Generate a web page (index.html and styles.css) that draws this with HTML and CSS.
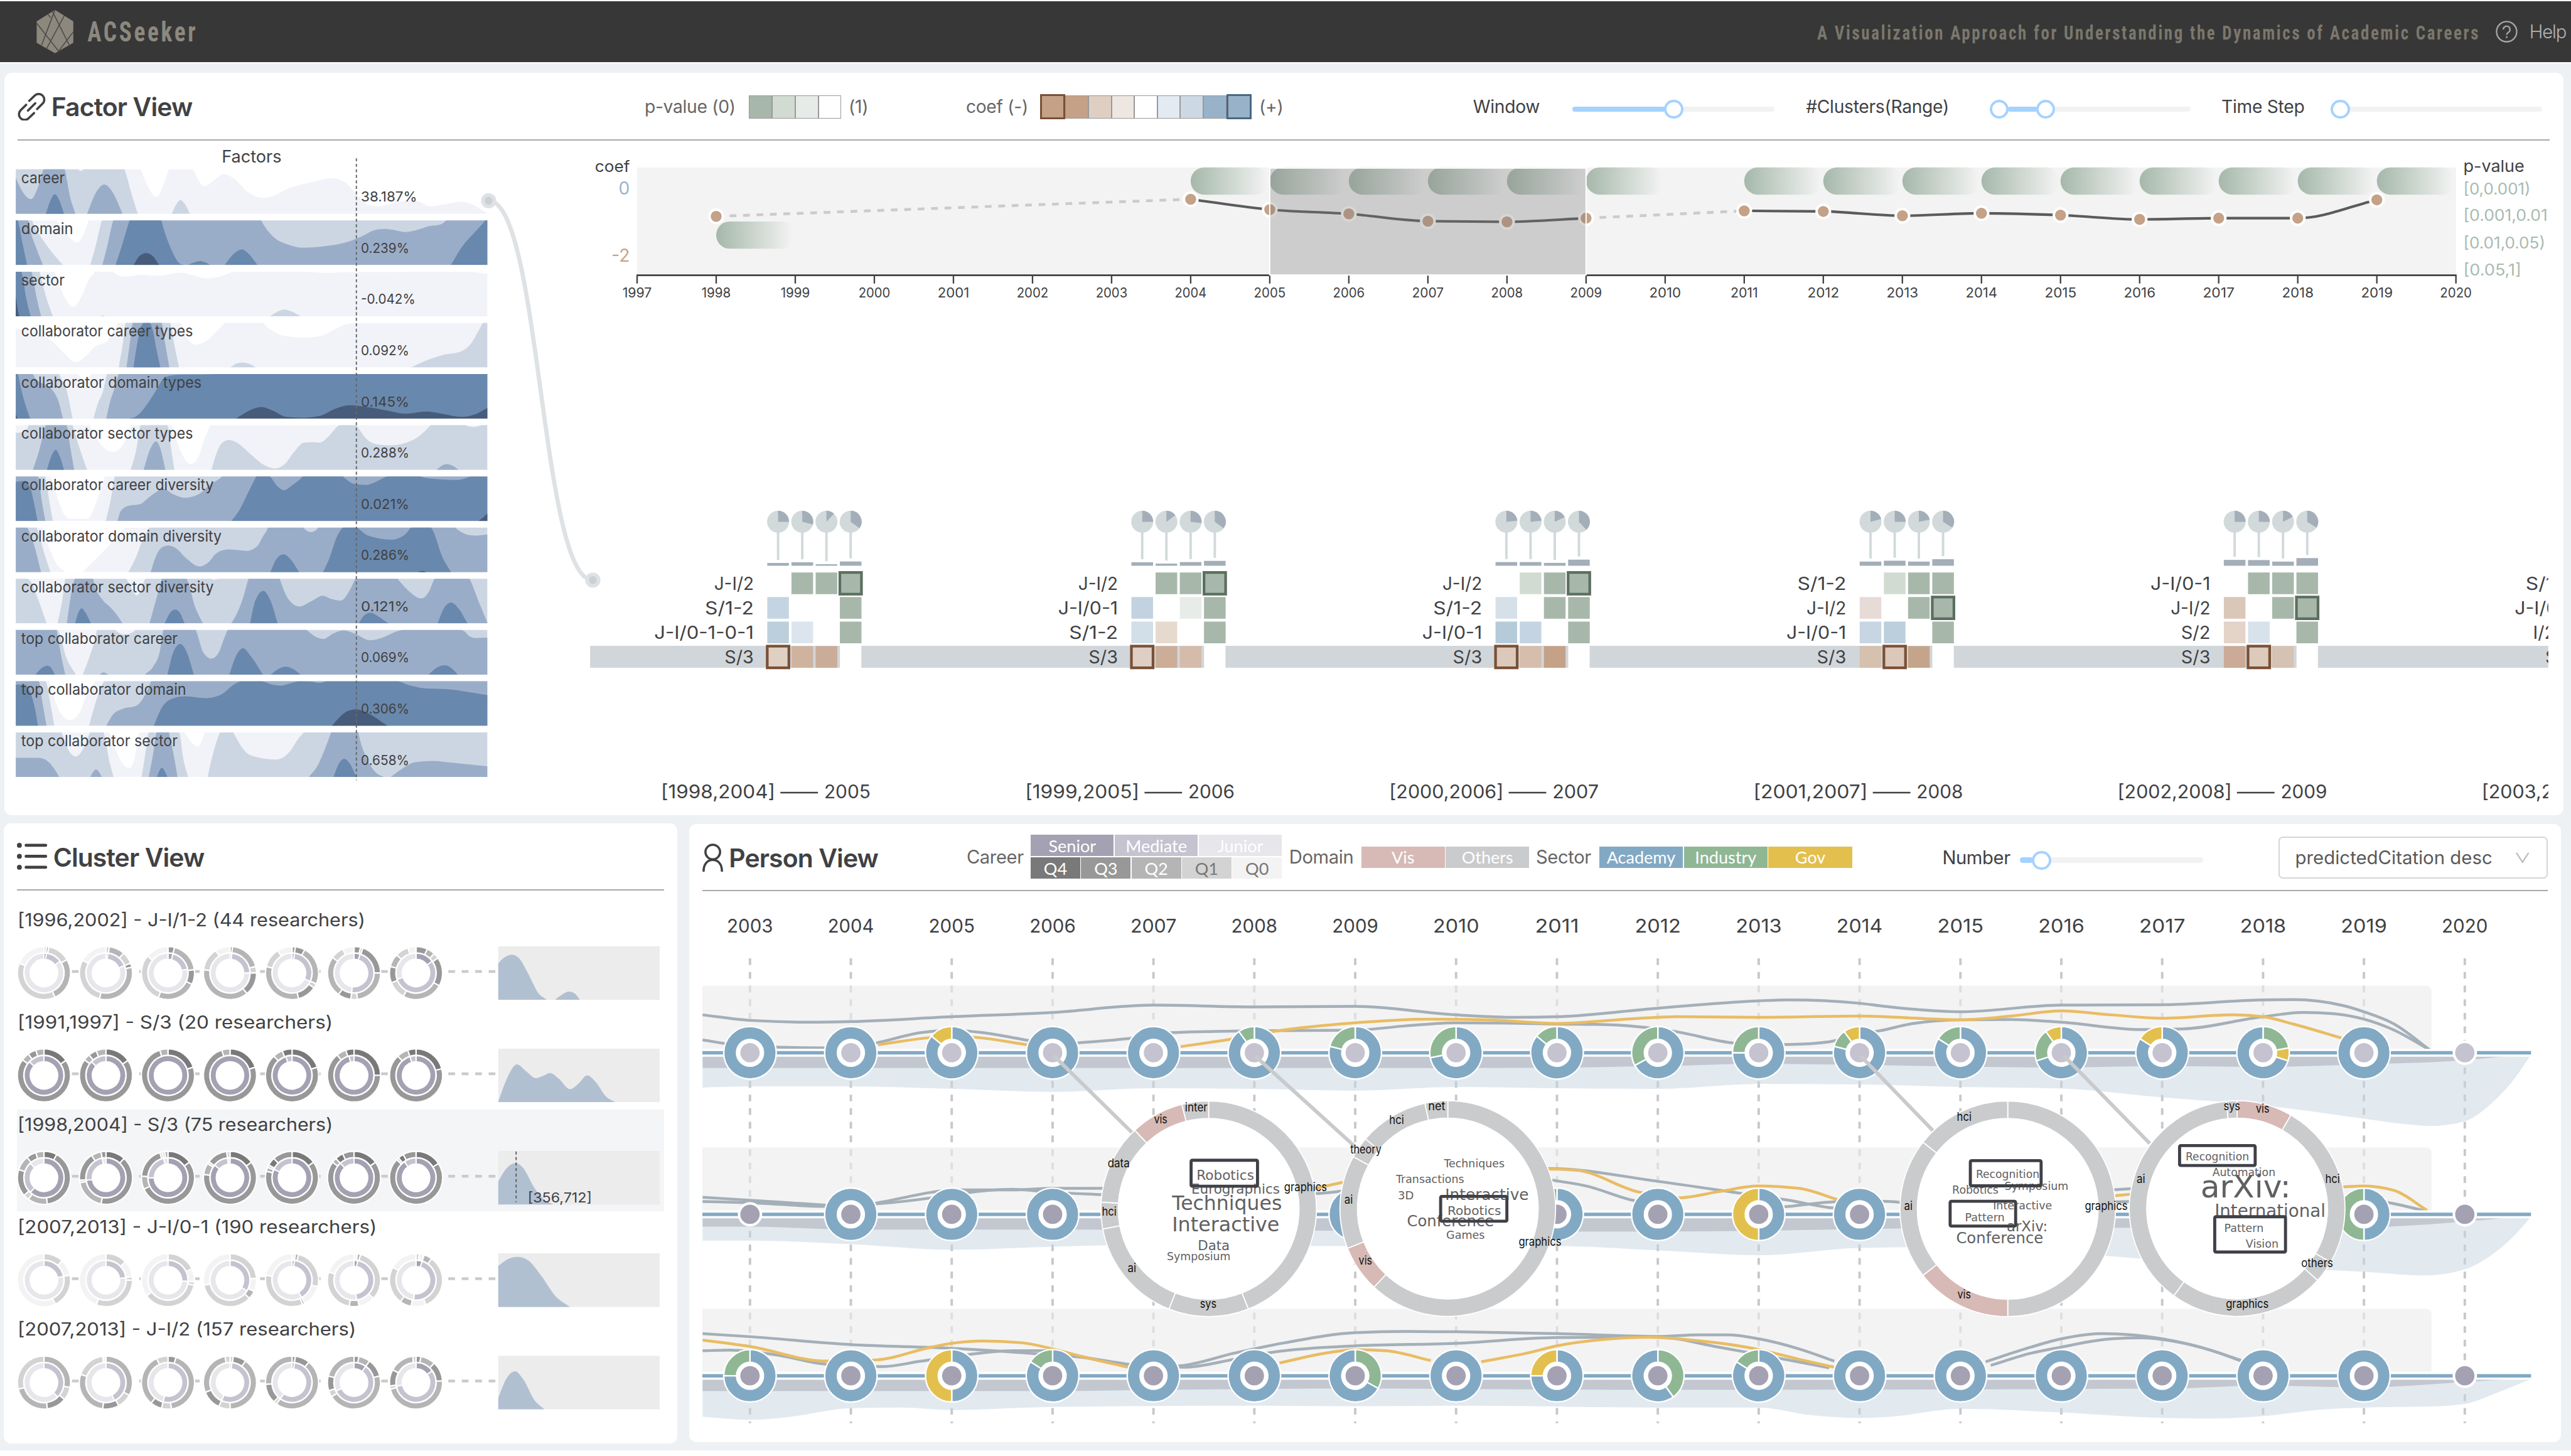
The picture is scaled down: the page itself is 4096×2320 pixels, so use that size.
FILE: index.html
```html
<!DOCTYPE html>
<html lang="en">
<head>
<meta charset="utf-8">
<title>ACSeeker</title>
<link rel="stylesheet" href="styles.css">
</head>
<body>
<header class="topbar">
  <svg class="brand" viewBox="0 0 400 100">
    <path class="brand-hex" d="M90 14L120 33V68L90 85L60 68V33Z"/>
    <path class="brand-cut" d="M60 36L97 83M86 17L114 73M90 14L68 72M105 24L76 78M120 50L95 83M78 21L83 27"/>
    <text class="tech" x="143" y="66" font-size="46" textLength="181" lengthAdjust="spacingAndGlyphs">ACSeeker</text>
  </svg>
  <div class="topbar-right">
    <svg class="tagline" viewBox="0 0 1090 100">
      <text class="tech dim" x="0" y="63" font-size="33" textLength="1085" lengthAdjust="spacingAndGlyphs">A Visualization Approach for Understanding the Dynamics of Academic Careers</text>
    </svg>
    <svg class="help-icon" viewBox="0 0 40 40"><circle cx="20" cy="20" r="16.5"/><path d="M14.500 16.500a5.500 5.500 0 1 1 8.500 4.600c-2 1.300-3 2-3 4.200"/><circle class="dot" cx="20" cy="29" r="1.500"/></svg>
    <span class="help">Help</span>
  </div>
</header>
<main>
  <section class="panel factor">
    <div class="head">
      <h2 class="w-ft"><svg class="ico" viewBox="0 0 46 46"><path d="M19 13L28 4.500a9 9 0 0 1 13 13L32 26.500M27 33L18 41.500a9 9 0 0 1-13-13L14 19.500M17 29L29 17"/></svg>Factor View</h2>
      <span class="lg w-pv">p-value (0)</span>
      <div class="ramp g"><i class="g1"></i><i class="g2"></i><i class="g3"></i><i></i></div>
      <span class="lg w-one">(1)</span>
      <span class="lg w-cf">coef (-)</span>
      <div class="ramp c"><i class="b1 selb"></i><i class="b1"></i><i class="b2"></i><i class="b3"></i><i></i><i class="u1"></i><i class="u2"></i><i class="u3"></i><i class="u3 selu"></i></div>
      <span class="lg w-plus">(+)</span>
      <span class="sl w-win">Window</span>
      <div class="slider s1"><b></b><u></u></div>
      <span class="sl w-clu">#Clusters(Range)</span>
      <div class="slider s2"><u></u><b></b><u></u></div>
      <span class="sl w-ts">Time Step</span>
      <div class="slider s3"><u></u></div>
    </div>
    <svg id="factor" viewBox="29 230 4144 1104"></svg>
  </section>
  <div class="lower">
    <section class="panel cluster">
      <div class="head">
        <h2><svg class="ico" viewBox="0 0 50 46"><path class="thick" d="M15 4H47M15 22H47M15 40H47"/><circle class="dot" cx="4" cy="4" r="4"/><circle class="dot" cx="4" cy="22" r="4"/><circle class="dot" cx="4" cy="40" r="4"/></svg>Cluster View</h2>
      </div>
      <svg id="cluster" viewBox="28 1458 1059 905"></svg>
    </section>
    <section class="panel person">
      <div class="head">
        <h2 class="w-pt"><svg class="ico slim" viewBox="0 0 34 46"><circle cx="17" cy="14" r="12"/><path d="M2 45c0-11 6-18 15-18s15 7 15 18"/></svg>Person View</h2>
        <span class="lg w-car">Career</span>
        <div class="career">
          <div class="cells"><i class="k1">Senior</i><i class="k2">Mediate</i><i class="k3">Junior</i></div>
          <div class="cells"><i class="q4">Q4</i><i class="q3">Q3</i><i class="q2">Q2</i><i class="q1">Q1</i><i class="q0">Q0</i></div>
        </div>
        <span class="lg w-dom">Domain</span>
        <div class="cells dom"><i class="vis">Vis</i><i class="oth">Others</i></div>
        <span class="lg w-sec">Sector</span>
        <div class="cells sec"><i class="aca">Academy</i><i class="ind">Industry</i><i class="gov">Gov</i></div>
        <span class="sl w-num">Number</span>
        <div class="slider s4"><b></b><u></u></div>
        <div class="select"><span>predictedCitation desc</span><svg viewBox="0 0 24 20"><path d="M2 2L12 17L22 2"/></svg></div>
      </div>
      <svg id="person" viewBox="1150 1459 3020 902"></svg>
    </section>
  </div>
</main>
<script src="charts.js"></script>
</body>
</html>
```
FILE: styles.css
```css
html { font-size: calc(100vw / 42.08); background: #fff; }
body { margin: 0; font-family: Inter, "Noto Sans", sans-serif; font-size: .28rem; color: #404143; overflow: hidden; }
h2, i, b, u { font-style: normal; font-weight: inherit; text-decoration: none; margin: 0; }
svg { display: block; }

.topbar { height: 1rem; margin-top: .02rem; background: #373737; display: flex; justify-content: space-between; overflow: hidden; }
.brand { width: 4rem; height: 1rem; }
.brand-hex { fill: #8c887e; }
.brand-cut { fill: none; stroke: #4b4a46; stroke-width: 1.6; }
.tech { font-weight: 700; fill: #8c887e; letter-spacing: .1em; }
.tech.dim { fill: #7b776c; }
.topbar-right { display: flex; align-items: center; }
.tagline { width: 10.9rem; height: 1rem; }
.help-icon { width: .4rem; height: .4rem; margin-left: .19rem; fill: none; stroke: #a5a5a5; stroke-width: 2.4; }
.help-icon .dot { fill: #a5a5a5; stroke: none; }
.help { font-size: .3rem; font-weight: 300; color: #b3b3b3; margin-left: .17rem; width: .68rem; letter-spacing: -.012rem; }

main { margin-top: .02rem; height: 22.7rem; background: #edf1f4; box-sizing: border-box; padding: .15rem .12rem 0 .07rem; }
.panel { background: #fff; border-radius: .12rem; box-sizing: border-box; overflow: hidden; }
.factor { height: 12.16rem; padding: 0 .23rem 0 .22rem; }
.lower { display: flex; gap: .19rem; margin-top: .13rem; }
.cluster { width: 11.03rem; height: 10.15rem; padding: 0 .22rem; margin-left: -.01rem; }
.person { width: 30.64rem; height: 10.12rem; padding: 0 .22rem; margin-top: .01rem; }
.head { height: 1.11rem; box-sizing: border-box; padding-top: .025rem; border-bottom: .022rem solid #aca7a8; display: flex; align-items: center; white-space: nowrap; }
.lower .head { height: 1.1rem; }
.panel > svg { width: 100%; }
#factor { height: 11.04rem; overflow: visible; }
#cluster { height: 9.05rem; }
#person { height: 9.02rem; }

h2 { font-size: .42rem; font-weight: 600; letter-spacing: -.009rem; display: flex; align-items: center; gap: .09rem; color: #404143; }
.ico { width: .46rem; height: .46rem; fill: none; stroke: #404143; stroke-width: 3.6; stroke-linecap: round; }
.ico .thick { stroke-width: 5; }
.ico .dot { fill: #404143; stroke: none; }
.ico.slim { width: .34rem; }
.cluster .ico { width: .5rem; }
.lg, .sl { font-size: .29rem; box-sizing: border-box; letter-spacing: -.003rem; }
.lg { color: #666; }
.w-ft { width: 10.26rem; }
.w-pv { width: 1.71rem; }
.w-one { width: 2.04rem; padding-left: .12rem; }
.w-cf { width: 1.21rem; }
.w-plus { width: 3.62rem; padding-left: .12rem; }
.w-win { width: 1.63rem; }
.w-clu { width: 3.01rem; margin-left: .52rem; }
.w-ts { width: 1.79rem; margin-left: .5rem; }
.w-pt { width: 4.32rem; }
.w-car { width: 1.05rem; }
.w-dom { width: 1.3rem; padding-left: .12rem; }
.w-sec { width: 1.145rem; padding-left: .11rem; }
.w-num { width: 1.27rem; margin-left: 1.476rem; }
.person .sl, .person .lg { font-size: .3rem; letter-spacing: -.004rem; }
.person .lg { margin-top: -.03rem; }

.ramp { display: flex; height: .38rem; box-sizing: border-box; }
.ramp i { flex: 1; box-sizing: border-box; border: .02rem solid #999; border-left-width: .01rem; border-right-width: .01rem; background: #fff; }
.ramp.g { width: 1.51rem; }
.ramp.c { width: 3.47rem; }
.ramp .g1 { background: #a7b8ab; }
.ramp .g2 { background: #d1dbd1; }
.ramp .g3 { background: #e6ebe7; }
.ramp .b1 { background: #c4a187; }
.ramp .b2 { background: #dfcfc3; }
.ramp .b3 { background: #eee6e1; }
.ramp .u1 { background: #e3eaf2; }
.ramp .u2 { background: #ccd9e4; }
.ramp .u3 { background: #98b2ca; }
.ramp .selb, .ramp .selu { border: .04rem solid #7a5036; margin: -.015rem 0; }
.ramp .selu { border-color: #4a6780; }

.slider { height: .09rem; border-radius: .05rem; background: #f2f2f2; display: flex; align-items: center; margin-top: .08rem; }
.slider b { height: .09rem; border-radius: .05rem; background: #a5d2ff; }
.slider u { width: .31rem; height: .31rem; box-sizing: border-box; border: .045rem solid #a5d2ff; border-radius: 50%; background: #fff; flex: none; }
.s1 { width: 3.3rem; }
.s1 b { width: 1.52rem; margin-right: -.02rem; }
.s2 { width: 3.29rem; }
.s2 b { width: .48rem; margin: 0 -.015rem; }
.s3 { width: 3.46rem; }
.s4 { width: 3rem; }
.s4 b { width: .22rem; margin-right: -.02rem; }

.career { width: 4.11rem; margin-top: -.035rem; }
.cells { display: flex; gap: .015rem; height: .35rem; margin-top: -.025rem; }
.career .cells { margin-top: 0; }
.career .cells + .cells { margin-top: .02rem; }
.cells i { flex: 1 1 0; display: flex; align-items: center; justify-content: center; color: #fff; font: 400 .278rem/1 Lato, sans-serif; }
.dom { width: 2.75rem; }
.sec { width: 4.14rem; }
.k1 { background: #a3a1b2; } .k2 { background: #c5c3d0; } .k3 { background: #e7e6ea; }
.q4 { background: #797979; } .q3 { background: #989898; } .q2 { background: #b5b5b5; }
.cells .q1 { background: #d3d3d3; color: #777; } .cells .q0 { background: #f3f3f3; color: #777; }
.vis { background: #d7b9b5; } .oth { background: #cacbcc; }
.aca { background: #82a9c4; } .ind { background: #8fb794; } .gov { background: #e3c04e; }
.select { margin-left: auto; width: 4.405rem; height: .685rem; box-sizing: border-box; border: .022rem solid #d6d6d6; border-radius: .07rem; display: flex; align-items: center; justify-content: space-between; padding: 0 .27rem 0 .25rem; font-size: .302rem; color: #595959; }
.select svg { width: .24rem; height: .2rem; fill: none; stroke: #bdbdbd; stroke-width: 2.4; }

svg text { font-family: Inter, "Noto Sans", sans-serif; }
svg text.tech { font-family: "Roboto Condensed", "Liberation Sans Narrow", Roboto, sans-serif; }
svg text.word { font-family: "DejaVu Sans", sans-serif; fill: #5f6062; }
```
FILE: charts.js
```js
const NS = 'http://www.w3.org/2000/svg';
function el(parent, tag, attrs, text) {
  const n = document.createElementNS(NS, tag);
  for (const k in attrs) n.setAttribute(k, attrs[k]);
  if (text !== undefined) n.textContent = text;
  parent.appendChild(n);
  return n;
}
function label(parent, x, y, str, size, o = {}) {
  const a = { x, y, 'font-size': size, fill: o.fill || '#404143' };
  if (o.anchor) a['text-anchor'] = o.anchor;
  if (o.len) { a.textLength = o.len; a.lengthAdjust = 'spacingAndGlyphs'; }
  if (o.cls) a.class = o.cls;
  return el(parent, 'text', a, str);
}
// Monotone cubic through the points
function curve(p) {
  const n = p.length, d = [], m = [];
  for (let i = 0; i < n - 1; i++) d.push((p[i + 1][1] - p[i][1]) / (p[i + 1][0] - p[i][0]));
  m[0] = d[0];
  for (let i = 1; i < n - 1; i++) {
    if (d[i - 1] * d[i] <= 0) { m[i] = 0; continue; }
    const h0 = p[i][0] - p[i - 1][0], h1 = p[i + 1][0] - p[i][0];
    const q = (d[i - 1] * h1 + d[i] * h0) / (h0 + h1);
    m[i] = Math.sign(d[i]) * Math.min(Math.abs(d[i - 1]) * 2, Math.abs(d[i]) * 2, Math.abs(q));
  }
  m[n - 1] = d[n - 2];
  let s = `${p[0][0]},${p[0][1]}`;
  for (let i = 0; i < n - 1; i++) {
    const h = (p[i + 1][0] - p[i][0]) / 3;
    s += `C${p[i][0] + h},${p[i][1] + m[i] * h} ${p[i + 1][0] - h},${p[i + 1][1] - m[i + 1] * h} ${p[i + 1][0]},${p[i + 1][1]}`;
  }
  return s;
}
const parse = s => s.trim().split(/\s+/).map(q => q.split(/[,:]/).map(Number));
const polar = (cx, cy, r, f) => [cx + r * Math.sin(f * 2 * Math.PI), cy - r * Math.cos(f * 2 * Math.PI)];
function sector(cx, cy, r0, r1, a, b) {
  if (b - a > .999) {
    const ring = r => `M${cx - r},${cy}a${r},${r} 0 1 0 ${2 * r},0a${r},${r} 0 1 0 ${-2 * r},0Z`;
    return ring(r1) + ring(r0);
  }
  const big = b - a > .5 ? 1 : 0;
  const [x0, y0] = polar(cx, cy, r1, a), [x1, y1] = polar(cx, cy, r1, b);
  const [x2, y2] = polar(cx, cy, r0, b), [x3, y3] = polar(cx, cy, r0, a);
  return `M${x0},${y0}A${r1},${r1} 0 ${big} 1 ${x1},${y1}L${x2},${y2}A${r0},${r0} 0 ${big} 0 ${x3},${y3}Z`;
}

/* ---------- Factor view: horizon rows ---------- */
const F = document.getElementById('factor');
const LV = ['', '#f1f3f8', '#ccd6e3', '#9aadc8', '#6988ad', '#475c7a'];
const FULL = '41,-5 1251,-5';
const factors = [
  ['career', '38.187%',
    [1, '41,-5 355,-5 361,0 375,30 402,62 420,35 434,0 437,-5 490,-5 496,0 510,25 525,38 545,28 575,11 600,20 635,50 672,64 700,60 740,43 800,29 855,20 885,29 915,55 945,80 968,83 1000,78 1045,70 1070,71 1105,83 1150,77 1185,73 1215,80 1251,99'],
    [2, '41,-5 199,-5 202,0 207,4 213,2 217,-3 318,-5 322,5 338,55 354,100'], [2, '441,100 452,80 463,69 475,78 488,100'],
    [3, '41,19 55,45 80,67 98,40 112,0 114,-5 165,-5 168,5 180,60 194,100'], [3, '224,100 245,55 268,34 290,52 315,100'],
    [4, '118,100 130,70 141,56 153,70 165,100']],
  ['domain', '0.239%',
    [1, '41,-5 138,-5 145,0 175,35 200,49 215,30 228,0 230,-5 1251,-5'],
    [2, '41,-5 80,-5 85,5 120,55 162,100'], [2, '232,100 245,60 262,0 264,-5 1251,-5'],
    [3, '41,-5 72,-5 74,5 95,65 111,100'], [3, '263,100 275,60 291,0 293,-5 668,-5 672,2 700,35 740,54 780,61 830,58 880,51 930,35 960,22 985,19 1010,21 1040,26 1075,20 1100,13 1130,9 1145,0 1150,-5 1251,-5'],
    [4, '41,-5 46,0 58,50 70,100'], [4, '297,100 312,60 333,0 335,-5 413,-5 416,5 440,65 465,98 480,100'], [4, '482,100 495,95 515,91 530,95 540,100'], [4, '577,100 600,75 621,65 642,78 661,100'], [4, '1157,100 1185,60 1220,25 1245,0 1251,-8'],
    [5, '343,100 358,80 375,73 393,80 409,100']],
  ['sector', '-0.042%',
    [1, '41,-5 138,-5 142,3 165,55 188,79 210,55 230,15 243,0 245,-5 285,-5 292,2 320,11 365,7 405,9 440,5 465,2 490,7 530,15 565,11 600,1 640,0 780,0 840,3 900,1 1000,1 1080,0 1200,0 1251,5'],
    [2, '41,-5 100,-5 105,10 120,60 136,100'], [2, '258,100 264,98 270,100'], [2, '693,100 712,90 730,85 750,90 772,100'],
    [3, '41,-5 80,-5 83,5 95,60 106,100'], [4, '41,-5 53,-5 57,5 68,60 79,100'], [5, '41,55 46,85 50,100']],
  ['collaborator career types', '0.092%',
    [1, '41,12 90,20 135,42 165,68 195,88 220,75 245,53 275,42 290,20 303,0 305,-5 460,-5 465,0 480,32 503,49 530,40 555,20 576,0 580,-5 672,-5 678,2 700,18 730,29 780,33 825,29 860,14 885,4 915,0 1251,0'],
    [2, '305,100 315,50 323,0 325,-5 435,-5 438,2 448,50 460,100'], [2, '592,100 608,91 625,89 640,92 657,100'], [2, '1055,100 1090,86 1140,71 1180,65 1210,45 1230,15 1240,0 1251,-3'],
    [3, '325,100 333,50 341,0 343,-5 413,-5 416,2 425,50 435,100'],
    [4, '343,100 350,60 360,15 370,0 384,0 392,15 402,60 412,100']],
  ['collaborator domain types', '0.145%',
    [1, '41,-5 195,-5 200,0 218,15 235,0 240,-5 1251,-5'],
    [2, '41,-5 150,-5 155,5 172,38 187,100'], [2, '240,100 252,65 265,38 275,0 277,-5 1251,-5'],
    [3, '41,-5 80,-5 90,8 137,38 152,65 162,100'], [3, '273,100 282,65 292,38 305,0 308,-5 1251,-5'],
    [4, '41,-5 46,0 56,38 68,75 78,100'], [4, '332,100 350,95 372,75 400,38 420,10 440,3 480,1 520,1 570,0 700,0 1251,0'],
    [5, '606,100 640,82 671,74 700,82 735,96 775,98 820,94 860,78 897,70 950,75 1000,83 1040,89 1095,84 1140,90 1185,96 1220,90 1251,76'], [5, '41,90 45,100']],
  ['collaborator sector types', '0.288%',
    [1, '41,-5 228,-5 232,2 255,38 290,60 315,45 335,5 340,-5 438,-5 443,5 460,50 490,87 510,70 525,30 538,2 540,-5 1251,-5'],
    [2, '41,17 65,15 74,0 76,-5 185,-5 190,10 208,60 224,100'], [2, '336,100 350,55 361,0 363,-5 428,-5 432,5 440,55 448,100'], [2, '543,100 555,65 570,40 588,33 610,40 640,62 680,90 706,97 730,88 755,60 780,39 800,38 820,39 840,28 870,0 875,-3 912,-3 918,4 940,30 970,43 1000,45 1040,40 1075,25 1105,0 1110,-5 1190,-5 1200,2 1215,4 1232,1 1240,-2 1251,-2'],
    [3, '85,100 100,60 118,0 120,-5 170,-5 173,5 182,55 191,100'], [3, '369,100 385,55 401,36 413,55 425,100'], [3, '1121,100 1135,90 1148,87 1162,91 1177,100'],
    [4, '121,100 132,70 144,55 154,70 165,100']],
  ['collaborator career diversity', '0.021%',
    [1, '41,-5 128,-5 133,5 145,40 165,85 180,95 225,95 240,75 255,40 268,5 270,-5 1251,-5'],
    [2, '41,-5 115,-5 118,5 128,60 136,100'], [2, '272,100 285,50 295,0 297,-5 1251,-5'],
    [3, '41,-5 94,-5 100,5 107,50 117,100'], [3, '302,100 310,78 330,66 360,62 385,45 420,28 445,40 475,48 510,40 540,18 570,0 575,-5 1251,-5'],
    [4, '41,12 65,10 80,30 88,60 97,100'], [4, '594,100 615,75 635,40 655,5 660,-3 688,-3 695,2 712,22 730,31 750,20 775,2 780,-3 875,-3 885,4 910,17 940,19 965,12 990,1 1000,-2 1070,-2 1090,3 1140,7 1175,8 1195,4 1210,0 1251,0'],
    [5, '1228,100 1240,92 1251,83']],
  ['collaborator domain diversity', '0.286%',
    [1, '41,-5 100,-5 110,0 125,40 145,80 168,100'], [1, '212,100 235,80 280,40 310,10 320,0 322,-5 1251,-5'],
    [2, '41,-5 92,-5 97,5 115,60 130,100'], [2, '330,100 350,65 370,20 383,0 385,-5 1251,-5'],
    [3, '41,-5 68,-5 72,2 90,45 106,100'], [3, '387,100 400,65 415,45 432,40 450,45 480,70 513,87 535,78 555,58 585,49 635,52 660,42 675,20 688,0 690,-5 775,-5 780,1 798,10 812,5 820,-2 1165,-2 1175,5 1200,16 1220,18 1251,15'],
    [4, '694,100 710,70 728,60 745,70 768,100'], [4, '829,100 845,70 865,20 880,0 885,-3 912,-3 920,2 945,18 1005,27 1040,15 1060,-2 1104,-2 1110,5 1135,65 1158,100'],
    [5, '1072,100 1085,97 1095,100']],
  ['collaborator sector diversity', '0.121%',
    [1, FULL],
    [2, '41,-5 65,-3 78,5 100,50 120,100'], [2, '148,100 160,50 168,0 170,-5 320,-5 328,5 352,37 372,2 376,-5 535,-5 548,2 560,0 565,-5 1251,-5'],
    [3, '172,100 180,50 192,0 194,-5 238,-5 242,10 262,45 285,65 300,80 315,100'], [3, '384,100 400,50 416,0 418,-5 476,-5 482,5 500,60 521,100'], [3, '594,100 610,75 625,40 638,0 640,-5 716,-5 720,5 740,45 768,62 800,50 828,38 850,45 875,49 895,30 912,0 915,-5 1015,-5 1025,5 1050,28 1082,44 1100,30 1115,0 1118,-5 1202,-5 1208,5 1228,50 1251,98'],
    [4, '193,100 202,75 210,66 220,76 234,100'], [4, '423,100 437,76 450,69 462,76 474,100'], [4, '642,100 655,50 676,27 695,50 713,100'], [4, '921,100 935,82 951,76 970,84 997,100'], [4, '1123,100 1140,65 1158,53 1178,68 1200,100']],
  ['top collaborator career', '0.069%',
    [1, FULL],
    [2, '41,-5 145,-5 152,5 170,60 195,100'], [2, '213,100 230,60 248,5 250,-5 290,-5 300,3 320,10 345,3 350,-5 1251,-5'],
    [3, '41,-5 145,-5 147,5 158,60 168,100'], [3, '256,100 266,95 278,100'], [3, '372,100 395,80 410,50 420,0 424,-5 500,-5 505,5 522,50 543,64 562,50 575,20 585,0 590,-5 780,-5 790,2 810,15 830,20 855,8 882,1 910,8 950,23 985,16 1015,4 1040,-1 1180,-1 1192,3 1205,14 1220,18 1251,17'],
    [4, '91,100 108,85 123,80 132,85 141,100'], [4, '430,100 445,50 463,31 480,50 498,100'], [4, '589,100 605,60 624,41 645,60 675,100'], [4, '695,100 715,87 734,82 752,87 772,100'], [4, '1100,100 1120,85 1142,79 1158,85 1175,100']],
  ['top collaborator domain', '0.306%',
    [1, '41,-5 125,-5 130,10 155,70 180,87 205,70 225,25 245,0 250,-5 1251,-5'],
    [2, '41,-5 115,-5 120,5 130,50 140,100'], [2, '229,100 245,50 267,0 270,-5 1251,-5'],
    [3, '41,-5 97,-5 102,5 110,50 120,100'], [3, '273,100 290,75 315,62 350,55 370,35 388,0 390,-5 1251,-5'],
    [4, '41,8 65,8 78,25 90,60 98,100'], [4, '395,100 412,65 440,40 475,34 530,38 570,29 600,8 620,0 670,0 700,8 720,10 745,5 770,0 800,1 820,4 840,0 1018,0 1050,9 1090,16 1150,18 1200,24 1251,31'],
    [5, '852,100 875,78 895,66 915,63 940,70 995,100']],
  ['top collaborator sector', '0.658%',
    [1, '41,-5 278,-5 284,5 305,55 332,80 345,60 355,15 360,-5 470,-5 478,5 495,25 507,31 517,22 528,-3 1251,-5'],
    [2, '41,-5 155,-5 162,8 180,45 195,54 212,40 232,0 236,-5 264,-5 268,5 280,60 292,100'], [2, '364,100 373,50 382,0 384,-5 455,-5 462,5 470,55 483,100'], [2, '533,100 545,55 565,0 568,-5 595,-5 602,5 620,32 645,52 710,61 745,42 765,15 780,0 785,-5 1251,-5'],
    [3, '41,57 100,57 125,66 140,82 153,100'], [3, '232,100 240,88 247,83 254,88 262,100'], [3, '382,100 393,50 402,0 404,-5 432,-5 435,5 446,50 456,100'], [3, '793,100 815,75 835,35 850,0 852,-5 918,-5 922,10 945,65 965,90 985,100'], [3, '1003,100 1035,80 1065,67 1110,64 1160,68 1251,76'],
    [4, '403,100 410,85 416,79 422,85 430,100'], [4, '856,100 870,70 884,59 898,70 915,100']],
];
const labelLen = [71, 85, 71, 281, 295, 281, 315, 328, 315, 256, 270, 256];
const pctLen = [92, 79, 89, 79, 79, 79, 79, 79, 79, 79, 79, 79];
label(F, 363, 266, 'Factors', 28, { len: 98 });
factors.forEach(([name, pct, ...areas], i) => {
  const top = 277 + 83.8 * i, h = 73;
  const row = el(F, 'svg', { x: 26, y: top, width: 772, height: h, viewBox: `0 0 772 ${h}` });
  for (const [lv, pts] of areas) {
    const p = parse(pts).map(([x, y]) => [(x - 41) / 1210 * 772, y / 100 * h]);
    el(row, 'path', { fill: LV[lv], d: `M${p[0][0]},${h}L${curve(p)}L${p[p.length - 1][0]},${h}Z` });
  }
  label(F, 35, top + 22.5, name, 25, { len: labelLen[i] });
  label(F, 591, top + 53, pct, 22.5, { len: pctLen[i] });
});
el(F, 'path', { d: 'M583.5,259V1277', stroke: '#66686b', 'stroke-width': 2, 'stroke-dasharray': '5 4' });
el(F, 'path', { d: 'M800,328.500C885,328.500 885,949.500 970.500,949.500', fill: 'none', stroke: '#dfe2e4', 'stroke-width': 7 });
for (const [x, y] of [[800, 328.5], [970.5, 949.5]]) {
  el(F, 'circle', { cx: x, cy: y, r: 12.5, fill: '#dfe2e4' });
  el(F, 'circle', { cx: x, cy: y, r: 6.5, fill: '#cad0d4' });
}

/* ---------- Factor view: coefficient timeline ---------- */
const defs = el(F, 'defs', {});
const lg = el(defs, 'linearGradient', { id: 'pill' });
el(lg, 'stop', { offset: 0, 'stop-color': '#a5b8aa' });
el(lg, 'stop', { offset: .97, 'stop-color': '#a5b8aa', 'stop-opacity': 0 });
const clip = el(defs, 'clipPath', { id: 'edge' });
el(clip, 'rect', { x: 900, y: 220, width: 3271, height: 1120 });
const T = el(F, 'g', { 'clip-path': 'url(#edge)' });
const X = y => 1043 + (y - 1997) * 129.43;
el(T, 'rect', { x: 1043, y: 274, width: 2977, height: 176, fill: '#f3f3f3' });
for (const y of [1998, 2004, 2005, 2006, 2007, 2008, 2009, 2011, 2012, 2013, 2014, 2015, 2016, 2017, 2018, 2019])
  el(T, 'rect', { x: X(y), y: y === 1998 ? 362.5 : 274, width: 129, height: 44.5, rx: 22, fill: 'url(#pill)' });
const pts = { 1998: 354, 2004: 326, 2005: 343, 2006: 350, 2007: 362, 2008: 363, 2009: 357, 2011: 345, 2012: 346, 2013: 353, 2014: 349, 2015: 352, 2016: 359, 2017: 357, 2018: 357, 2019: 327 };
const seg = ys => curve(ys.map(y => [X(y), pts[y]]));
el(T, 'path', { d: 'M' + seg([2004, 2005, 2006, 2007, 2008, 2009]), fill: 'none', stroke: '#5b5b5b', 'stroke-width': 4.2 });
el(T, 'path', { d: 'M' + seg([2011, 2012, 2013, 2014, 2015, 2016, 2017, 2018, 2019]), fill: 'none', stroke: '#5b5b5b', 'stroke-width': 4.2 });
for (const [a, b] of [[1998, 2004], [2009, 2011]])
  el(T, 'path', { d: `M${X(a)},${pts[a]}L${X(b)},${pts[b]}`, stroke: '#cbcbcb', 'stroke-width': 4.6, 'stroke-dasharray': '11 11' });
for (const y in pts) el(T, 'circle', { cx: X(+y), cy: pts[y], r: 11, fill: '#c4a187', stroke: '#fff', 'stroke-width': 4 });
el(T, 'path', { d: `M1042,450.500H${X(2005)}M${X(2009)},450.500H4021`, stroke: '#404143', 'stroke-width': 2.6 });
el(T, 'rect', { x: X(2005), y: 275, width: X(2009) - X(2005), height: 175, fill: '#777', 'fill-opacity': .3, stroke: '#fff', 'stroke-width': 2 });
for (let y = 1997; y <= 2020; y++) {
  el(T, 'path', { d: `M${X(y)},451V464`, stroke: '#404143', 'stroke-width': 2.4 });
  label(T, X(y), 486.5, y, 22, { anchor: 'middle', len: y === 2011 ? 45 : y < 2000 ? 48 : 52 });
}
label(T, 1031, 281, 'coef', 26, { anchor: 'end', len: 57 });
label(T, 1031, 318, '0', 29, { anchor: 'end', fill: '#9ab5cd' });
label(T, 1031, 428.5, '-2', 29, { anchor: 'end', fill: '#c8a284', len: 30 });
label(T, 4032, 281, 'p-value', 27, { len: 100 });
[['[0,0.001)', 318, 110], ['[0.001,0.01)', 362, 148], ['[0.01,0.05)', 407, 134], ['[0.05,1]', 451, 95]]
  .forEach(([s, y, len]) => label(T, 4032, y, s, 26, { fill: '#a9bbaf', len }));

/* ---------- Factor view: transition matrices ---------- */
const G = '#a7b8ab', o = null;
const groups = [
  { l: ['J-I/2', 'S/1-2', 'J-I/0-1-0-1', 'S/3'], p: [.25, .29, .12, .35], b: [4.6, 5.7, 2.5, 7], g: [0, 3], s: 0,
    c: [[o, G, G, G], ['#c5d4e2', o, o, G], ['#bccfdc', '#dce5ed', o, G], ['#e0d0c4', '#cfb39f', '#caad98', o]] },
  { l: ['J-I/2', 'J-I/0-1', 'S/1-2', 'S/3'], p: [.25, .15, .27, .35], b: [5.7, 3.5, 6, 8], g: [0, 3], s: 0,
    c: [[o, G, G, G], ['#c3d2e1', o, '#e7ece8', G], ['#d2dee8', '#e6dacf', o, G], ['#dfcec3', '#cbad98', '#d5bba9', o]] },
  { l: ['J-I/2', 'S/1-2', 'J-I/0-1', 'S/3'], p: [.235, .235, .18, .38], b: [6, 6, 4.7, 10], g: [0, 3], s: 0,
    c: [[o, '#d2dbd2', G, G], ['#d6e0e9', o, G, G], ['#b5cbd9', '#c5d4e2', o, G], ['#dcc9bc', '#d6bdac', '#c4a187', o]] },
  { l: ['S/1-2', 'J-I/2', 'J-I/0-1', 'S/3'], p: [.21, .25, .22, .34], b: [6.8, 8.2, 6.8, 10.7], g: [1, 3], s: 1,
    c: [[o, '#d2dbd2', G, G], ['#e7dbd7', o, G, G], ['#c8d5e2', '#bccfdd', o, G], ['#d6c0ae', '#dcc8ba', '#c4a58b', o]] },
  { l: ['J-I/0-1', 'J-I/2', 'S/2', 'S/3'], p: [.25, .25, .175, .34], b: [9.6, 9.3, 6.8, 12.5], g: [1, 3], s: 1,
    c: [[o, G, G, G], ['#dac7b8', o, G, G], ['#e4d3c7', '#d8e2eb', o, G], ['#cbab97', '#dccabc', '#d6c2b2', o]] },
  { l: ['S/1-2', 'J-I/0-1', 'I/2-3', 'S/3'], p: [], b: [], c: [] },
];
const lens = { 'J-I/2': 65, 'S/1-2': 80, 'J-I/0-1-0-1': 163, 'S/3': 48, 'J-I/0-1': 98, 'S/2': 48, 'I/2-3': 68 };
groups.forEach((gr, k) => {
  const x0 = 1256 + 596 * k;
  el(T, 'rect', { x: k ? x0 - 596 + 154 : 966, y: 1057, width: k ? 561 : 409, height: 36, fill: '#d1d6da' });
  gr.l.forEach((s, r) => label(T, x0 - 22, 965.5 + 40.2 * r, s, 29, { anchor: 'end', len: lens[s] }));
  gr.p.forEach((f, j) => {
    const x = x0 + 39.6 * j, cx = x + 17.7, bt = 926 - gr.b[j];
    el(T, 'path', { d: `M${cx},854V${bt - 5}`, stroke: '#d2d9da', 'stroke-width': 4 });
    el(T, 'circle', { cx, cy: 854, r: 18, fill: '#d2d9da' });
    el(T, 'path', { d: sector(cx, 854, 0, 18, 0, f), fill: '#a3aeb8' });
    el(T, 'rect', { x, y: bt, width: 35.4, height: gr.b[j], fill: '#a3aeb8' });
  });
  gr.c.forEach((row, r) => row.forEach((c, j) => {
    if (!c) return;
    const x = x0 + 39.6 * j, y = 937 + 40.2 * r;
    el(T, 'rect', { x, y, width: 35.4, height: 35.5, fill: c });
    if (gr.g[0] === r && gr.g[1] === j || r === 3 && gr.s === j)
      el(T, 'rect', { x, y, width: 35.4, height: 35.5, fill: 'none', stroke: r === 3 ? '#7a5035' : '#5c6f5f', 'stroke-width': 4.4 });
  }));
  const a = 1998 + k, bx = 1082 + 596 * k;
  label(T, bx, 1306.5, `[${a},${a + 6}]`, 30, { len: 187 });
  el(T, 'path', { d: `M${bx + 195.500},1297.500h61.500`, stroke: '#404143', 'stroke-width': 2.6 });
  label(T, bx + 267, 1306.5, a + 7, 30, { len: 76 });
});

/* ---------- Cluster view ---------- */
const C = document.getElementById('cluster');
const Q = ['#f3f3f3', '#d3d3d3', '#b5b5b5', '#989898', '#797979'], S = { S: '#a3a1b2', M: '#c5c3d0', J: '#e7e6ea' };
const clusters = [
  ['[1996,2002] - J-I/1-2 (44 researchers)', 569, [
    '1.015 2.03 1.166 2.432 1.81 0|S.02 M.15 J', '1.02 2.116 1.19 3.215 2.54 1.83 0|S.015 M.19 J', '3.04 2.23 3.32 2.56 1.86 0|S.04 M.22 J',
    '3.015 2.21 1.25 3.39 2.77 1.91 0|S.015 M.25 J', '3.02 3.08 2.317 1.345 3.46 2.79 1.91 0|S.02 M.32 J',
    '3.04 1.055 3.25 2.48 1.52 3.6 2.85 1.93 0|S.05 M.52 J', '3.07 2.12 1.155 3.33 2.58 1.69 3.79 2.87 1.95 0|S.15 M.7 J'],
    ['0,28.500 9,19.500 23,14 34,19.500 49,44.500 66,77 80,88', '93,88 106,78.500 116,74.500 126,78 134,88']],
  ['[1991,1997] - S/3 (20 researchers)', 516, [
    '4.155 3.85 2.9 3.95 2|S.87 M', '4.155 3.85 2.89 3.94 2|S.87 M', '4.2 3.95 2|S', '4.2 3.95 2|S', '4.2 3.88 2.94 4|S.95 M', '4.25 3.89 2.95 4|S.96 M', '4.21 3.88 2.95 4|S.95 M'],
    ['0,88 13,52.500 31,26 45,36.500 62,48.500 74,44.500 85,40 99,49 118,66.500 131,58 146,44 159,54 177,79 192,88']],
  ['[1998,2004] - S/3 (75 researchers)', 516, [
    '4.08 3.48 2.6 1.635 3.8 2.89 3.95 2|S.62 M.88 J', '4.12 3.53 2.72 1.735 3.91 2.97 3|S.73 M.97 J', '4.15 3.68 2.76 3.95 1.965 1.98 2|S.75 M.965 J',
    '4.15 3.77 2.84 1.855 3.98 1|S.86 M.98 J', '4.15 3.79 2.815 1.83 4.88 3|S.82 M', '4.15 3.85 2.88 4.93 3|S.88 M', '4.16 3.87 1.885 4.92 3|S.9 M'],
    ['0,50.500 13,29.500 28.500,20 41,28 59,60 74,78.500 90,87.500']],
  ['[2007,2013] - J-I/0-1 (190 researchers)', 588, [
    '1.12 0.22 1.43 0|M.22 J', '1.13 0.23 1.25 1.56 0|M.23 J', '1.18 0.26 1.28 1.65 0|M.26 J', '1.24 0.32 2.37 1.72 0|M.34 J', '0.02 2.04 1.29 0.42 2.435 1.78 0|S.02 M.42 J',
    '0.02 2.04 1.37 0.47 2.53 1.8 0|S.03 M.48 J', '1.02 0.05 2.1 1.44 0.53 2.6 1.83 0|S.05 M.52 J'],
    ['0,21 16,9.500 32,6 48.500,11 70,36 95,71.500 117,87.500']],
  ['[2007,2013] - J-I/2 (157 researchers)', 554, [
    '2.28 1.36 3.48 2.71 1|M.38 J', '2.33 1.42 3.52 2.8 1.98 0|M.43 J', '3.05 2.48 1.54 3.61 2.93 1|M.54 J', '1.02 3.1 2.5 1.57 3.69 2.97 1|S.015 M.57 J', '3.02 3.11 2.6 1.62 3.74 2|S.02 M.6 J',
    '3.03 2.1 3.21 2.66 1.7 3.79 2|S.1 M.68 J', '3.03 2.12 3.24 2.71 1.73 3.83 2.98 1|S.15 M.72 J'],
    ['0,70 13,38.500 28,25.500 41,38.500 59,72 76,88']],
];
function ring(parent, cx, cy, r0, r1, spec, colors, sw) {
  let a = 0;
  for (const t of spec.split(' ')) {
    const b = t.length > 1 ? parseFloat(t.slice(1)) : 1;
    el(parent, 'path', { d: sector(cx, cy, r0, r1, a, b), fill: colors[t[0]], 'fill-rule': 'evenodd', stroke: '#fff', 'stroke-width': sw });
    a = b;
  }
}
clusters.forEach(([title, len, rings, areas], i) => {
  const t = 1481 + 167.6 * i;
  if (i === 2) el(C, 'rect', { x: 28, y: t, width: 1059, height: 167, fill: '#f4f5f7' });
  label(C, 29, t + 35.500, title, 29.500, { len });
  el(C, 'path', { d: `M96,${t + 109.500}H811`, stroke: '#cbcbcb', 'stroke-width': 4.6, 'stroke-dasharray': '11 11' });
  rings.forEach((r, j) => {
    const cx = 72.2 + 101.5 * j, cy = t + 112, [outer, inner] = r.split('|');
    el(C, 'circle', { cx, cy, r: 44, fill: '#fff' });
    ring(C, cx, cy, 33, 43.500, outer, Q, 2.2);
    ring(C, cx, cy, 22.5, 32.500, inner, S, 2);
  });
  const box = el(C, 'svg', { x: 815.5, y: t + 68, width: 264.5, height: 88 });
  el(box, 'rect', { width: 264.5, height: 88, fill: '#ececec' });
  for (const s of areas) {
    const p = parse(s);
    el(box, 'path', { d: `M${p[0][0]},88L${curve(p)}L${p[p.length - 1][0]},88Z`, fill: '#b1c0d1' });
  }
  if (i === 2) {
    el(C, 'path', { d: `M845,${t + 69}v83`, stroke: '#555', 'stroke-width': 1.8, 'stroke-dasharray': '5 4' });
    label(C, 864, t + 152.5, '[356,712]', 22.5, { len: 105 });
  }
});

/* ---------- Person view ---------- */
const P = document.getElementById('person');
const TX = t => 1227.9 + 165.1 * t;
const B = '#82a9c4', GR = '#8fb794', YE = '#e3c04e';
for (let k = 0; k < 18; k++) {
  label(P, TX(k), 1526.5, 2003 + k, 31, { anchor: 'middle', len: k === 8 ? 72 : 75.5 });
  el(P, 'path', { d: `M${TX(k)},1569V2330`, stroke: '#c8c8c9', 'stroke-width': 4, 'stroke-dasharray': '11 11.300' });
}
const persons = [
  { y: 1723.5, dot: '#c5c3d0',
    low: '-.47,57 0,55 1,55 2,59 3,64 4,58 5,59 6,62 7,56 8,58 9,59 10,51 11,52 12,56 13,58.500 14,73 15,86 16,108 16.360,116 16.660,120 17,112 17.270,82 17.490,43 17.645,6',
    mid: '-.47,25 7,25 9,22 10,18 11,20 13,24 14,22 15,23 16,19 17,12 17.400,6',
    gray: ['-.47,62 0,53 .6,50 1,51 2,59 3,66 4,78 5,75 6,76 7,62 7.600,58 8,59 9,73 10,85 10.300,86.500 11,81 11.220,76.500 12,67 13,78 14,78.500 15,86.500 15.300,87 15.800,77 16,67 16.300,47 16.650,5',
      '-.47,21 -.2,14 0,10 1,8 1.250,16 1.700,33 2,37 2.300,33 2.800,19 3,14 3.300,17 3.800,24 4.200,33 4.600,35 5,36 6,37 6.500,44 7,49 7.500,48.500 8,47 8.500,46 8.900,41 9.200,34 9.700,17 10,13 10.300,13.500 10.700,18 11,31 11.200,36 11.500,47 12,54 12.500,54.500 13,50 13.800,38 14.200,39 15,59 15.400,66 15.700,64 16,55 16.300,37 16.650,5'],
    gold: ['1.270,13 1.800,25 2,27 2.250,25 2.750,13', '4.270,10 4.800,23 5.200,35 6,49 6.700,55 7.300,54 8,48 8.600,54 9.200,59 10,58 11,60 12,54 12.500,60 13,68.500 13.500,62 14,56.500 14.700,62 15,59 15.300,47 15.800,23'],
    seg: { 2: 'B.86 Y', 5: 'B.9 G', 6: 'B.79 G', 7: 'B.72 G', 8: 'B.86 G', 9: 'B.67 G', 10: 'B.75 G', 11: 'B.79 G.9 Y', 12: 'B.84 G', 13: 'B.7 G.9 Y', 14: 'B.84 Y', 15: 'G.22 Y.3 B' } },
  { y: 1988, dot: '#a3a1b2', bare: 0,
    low: '-.47,43 0,43 1,49 2,58 3,53 4,50 5,52 6,52 8,52 9,59 10,67 11,55 12,53 12.500,60 13,63 14,75 15,86 16,94 16.600,100 17,90 17.270,66 17.490,35 17.645,6',
    mid: '-.47,20 0,20 1,25 3,25 8,28 9,28 10,27 11,24 12,22 14,22 16,21 17,12 17.400,6',
    gray: ['-.47,28 0,23 .75,15 1,12 1.300,20 1.800,36 2,40 2.600,40 3,42.500 3.500,42.500 5,36 5.600,34 5.870,38 7.930,75 9,54 9.800,35 10.300,23 10.700,11 11,8',
      '-.47,21 0,19 .75,13 1.250,17 1.800,27 2,32 2.600,41 3,36 3.500,32', '7.950,56 8.300,46 8.750,23 9,16', '10,8 10.300,13 10.700,20 11,22 11.300,21 11.500,18', '13.400,39 13.700,42', '13.400,20 13.700,21', '16,25 16.250,19 16.620,5'],
    gold: ['5.550,40 5.870,52 6.500,66 7.930,74 8.200,72 8.800,37 9.200,27 9.600,37 10,46.500 10.400,42.500 10.800,23', '13.400,28 13.700,33 15.800,45 16,46.500 16.300,39 16.630,6'],
    seg: { 8: 'B.86 G', 10: 'B.5 Y', 16: 'B.5 G' } },
  { y: 2252.3, dot: '#a3a1b2',
    low: '-.47,67 0,72 .4,67 1,53 1.500,52 2,56 3,51 5,49 6,50 7,49 9,52 10,52 10.500,64 11,69 11.300,67 12,54 13,60 14,69 14.500,70 15,66 15.600,55 16,52 16.700,50 17,46 17.300,29 17.645,6',
    mid: '-.47,25 3,25 4,23 6,21 9,23 14,21 15,16 16,19 17,10 17.400,6',
    gray: ['-.47,69 0,64 1,51 2,45 3,34 3.300,30 3.750,19 4,14 4.300,17 4.800,37 5.300,54 6,70.500 6.500,72.500 7,72 8,69 9,64.500 9.400,67 9.700,67 10,60.500 10.400,44 10.750,24',
      '-.47,41 -.2,42 0,40 .3,33 .75,19 1.300,15 1.700,24 2,31 2.600,41 3,41 3.300,31 3.750,17 4.300,14 4.800,27 5.200,39 6,49 7,53 8,62.500 9,63 9.600,47 10,35 10.700,13',
      '12.250,23 12.700,47 13,60.500 13.400,69 13.700,67 14,60.500 14.500,41 14.800,24', '12.300,17 12.700,37 13,47 13.500,60.500 13.800,62 14.100,57 14.500,41 14.800,23'],
    gold: ['-.47,58.500 0,48 .75,24 1.250,26 1.800,47 2,53 2.300,57 2.700,54 3,44 3.300,31 3.750,14', '5.250,21 5.700,37 6,42.500 6.300,41 6.750,25', '7.250,23 7.700,37 8,49 8.500,60 8.900,63 9.300,59 10,43 10.400,27 10.750,14'],
    seg: { 0: 'B.75 G', 2: 'B.5 Y', 3: 'B.84 G', 6: 'G.33 B', 8: 'B.75 Y', 9: 'G.4 B', 10: 'B.84 G' } },
];
const place = (s, y, k) => parse(s).map(([t, v]) => [TX(t), y + k * v]);
for (const r of persons) {
  const band = (s, fill, op) => {
    const p = place(s, r.y, 1);
    el(P, 'path', { d: `M${p[0][0]},${r.y}L${curve(p)}L${p[p.length - 1][0]},${r.y}Z`, fill, 'fill-opacity': op });
  };
  el(P, 'path', { d: `M1150,${r.y - 109.500}H3972a8,8 0 0 1 8,8V${r.y - 5}H1150Z`, fill: '#ececec', 'fill-opacity': .62 });
  band(r.low, '#c7d5e1', .52);
  band(r.mid, '#b2b5be', .65);
  for (const s of r.gray) el(P, 'path', { d: 'M' + curve(place(s, r.y, -1)), fill: 'none', stroke: '#a4afb8', 'stroke-width': 4.6 });
  for (const s of r.gold) el(P, 'path', { d: 'M' + curve(place(s, r.y, -1)), fill: 'none', stroke: '#e9bc63', 'stroke-width': 4.6 });
  el(P, 'path', { d: `M1150,${r.y}H4143`, stroke: '#fff', 'stroke-width': 13 });
  el(P, 'path', { d: `M1150,${r.y}H4143`, stroke: B, 'stroke-width': 5.6 });
  for (let k = 0; k < 18; k++) {
    const cx = TX(k);
    if (k === 17 || r.bare === k) {
      el(P, 'circle', { cx, cy: r.y, r: 20, fill: '#fff' });
    } else {
      ring(P, cx, r.y, 22, 43, r.seg[k] || 'B', { B, G: GR, Y: YE }, 2.4);
      el(P, 'circle', { cx, cy: r.y, r: 22.5, fill: '#fff' });
    }
    el(P, 'circle', { cx, cy: r.y, r: 15.8, fill: r.dot });
  }
}

/* Word-cloud lenses; kx/ox map the lens layout columns to the drawing */
const KY = .6652, Y0 = 1340;
const lenses = [
  { c: [1978.6, 1979], ox: 1120, kx: .7015, seg: 'o.44 o.56 o.72 o.76 o.88 v.96 o', link: [1725, 1728, 1853, 1854],
    tags: [['inter', 1195, 721], ['vis', 1112, 749], ['data', 1014, 858], ['hci', 992, 976], ['ai', 1045, 1116], ['sys', 1223, 1204], ['graphics', 1450, 916]],
    words: [['Robotics', 1197, 1328, 888], ['Eurographics', 1185, 1388, 922], ['Techniques', 1140, 1393, 962], ['Interactive', 1140, 1387, 1014], ['Data', 1200, 1271, 1061], ['Symposium', 1128, 1273, 1085]],
    boxes: [[1183, 841, 1338, 905]] },
  { c: [2370, 1978.6], ox: 2100, kx: .6378, seg: 'o.62 v.69 o.83 o.862 o.966 o', link: [2055, 1729, 2218, 1877],
    tags: [['net', 395, 717], ['hci', 292, 751], ['theory', 213, 823], ['ai', 169, 947], ['vis', 212, 1097], ['graphics', 660, 1051]],
    words: [['Techniques', 415, 567, 856], ['Transactions', 292, 463, 896], ['3D', 297, 334, 936], ['Interactive', 418, 629, 937], ['Robotics', 424, 558, 974], ['Conference', 320, 540, 1002], ['Games', 421, 516, 1033]],
    boxes: [[405, 930, 575, 991]] },
  { c: [3286.5, 1979], ox: 3080, kx: .7194, seg: 'o.5 v.644 o.856 o', link: [3046, 1729, 3164, 1851],
    tags: [['hci', 188, 743], ['ai', 61, 962], ['graphics', 511, 962], ['vis', 188, 1180]],
    words: [['Recognition', 216, 357, 883], ['Symposium', 281, 423, 912], ['Robotics', 162, 264, 922], ['Interactive', 255, 386, 960], ['Pattern', 191, 278, 989], ['arXiv:', 286, 376, 1014], ['Conference', 171, 366, 1043]],
    boxes: [[202, 842, 363, 904], [156, 942, 305, 1003]] },
  { c: [3662, 1978.6], ox: 3080, kx: .7194, seg: 'v.083 o.333 o.366 o.6 o.984 o', link: [3378, 1728, 3519, 1872],
    tags: [['sys', 797, 717], ['vis', 867, 724], ['ai', 590, 896], ['hci', 1026, 896], ['others', 991, 1103], ['graphics', 832, 1203]],
    words: [['Recognition', 693, 834, 840], ['Automation', 754, 894, 878], ['arXiv:', 727, 929, 931], ['International', 759, 1008, 979], ['Pattern', 781, 867, 1015], ['Vision', 830, 901, 1055]],
    boxes: [[678, 805, 850, 854], [758, 980, 919, 1067]] },
];
const tagLen = { inter: 37, vis: 22, data: 36, hci: 24, ai: 14, sys: 27, graphics: 70, net: 28, theory: 51, others: 52 };
const meter = document.createElement('canvas').getContext('2d');
meter.font = '100px "DejaVu Sans"';
for (const L of lenses) {
  el(P, 'path', { d: `M${L.link[0]},${L.link[1]}L${L.link[2]},${L.link[3]}`, stroke: '#c9cacc', 'stroke-width': 6 });
  el(P, 'circle', { cx: L.c[0], cy: L.c[1], r: 176, fill: '#fff' });
  ring(P, L.c[0], L.c[1], 148, 176.5, L.seg, { o: '#cacbcc', v: '#d7b9b5' }, 1.8);
}
for (const L of lenses) {
  const px = x => L.ox + L.kx * x, py = y => Y0 + KY * y;
  for (const [s, x0, x1, y] of L.words) {
    const w = (x1 - x0) * L.kx + 2.5;
    label(P, px(x0) - 1, py(y) + 1.2, s, w / meter.measureText(s).width * 100, { cls: 'word' });
  }
  for (const [s, x, y] of L.tags) label(P, px(x), py(y) + .5, s, 19, { anchor: 'middle', fill: '#111', len: tagLen[s] });
  for (const [a, b, c, d] of L.boxes)
    el(P, 'rect', { x: px(a), y: py(b), width: (c - a) * L.kx, height: (d - b) * KY, rx: 2, fill: 'none', stroke: '#404147', 'stroke-width': 5 });
}
```
